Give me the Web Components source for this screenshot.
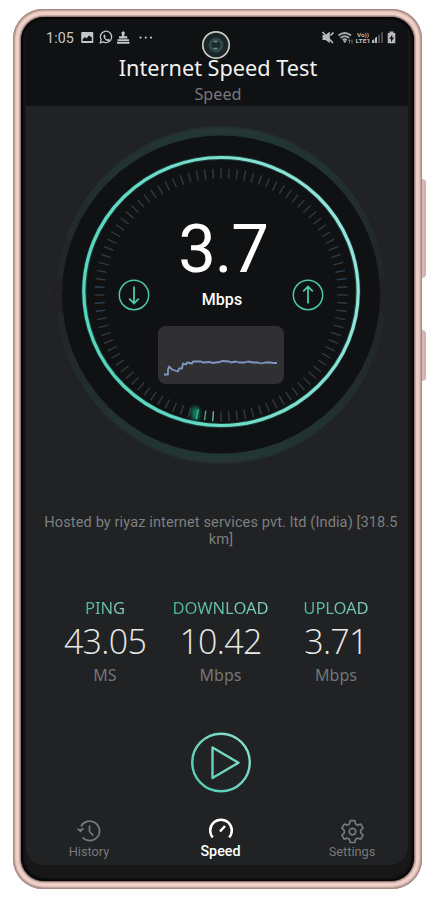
<!DOCTYPE html>
<html lang="en">
<head>
<meta charset="utf-8">
<title>Internet Speed Test</title>
<style>
html,body{margin:0;background:#fff;height:900px;overflow:hidden}
</style>
</head>
<body>
<phone-frame>
  <status-bar slot="top"></status-bar>
  <app-title slot="top" sub="Speed">Internet Speed Test</app-title>
  <speed-gauge value="3.7" unit="Mbps"></speed-gauge>
  <host-line>Hosted by riyaz internet services pvt. ltd (India) [318.5 km]</host-line>
  <stat-row>
    <stat-item label="PING" unit="MS">43.05</stat-item>
    <stat-item label="DOWNLOAD" unit="Mbps">10.42</stat-item>
    <stat-item label="UPLOAD" unit="Mbps">3.71</stat-item>
  </stat-row>
  <play-button></play-button>
  <tab-bar>
    <tab-item icon="history">History</tab-item>
    <tab-item icon="speed" active>Speed</tab-item>
    <tab-item icon="settings">Settings</tab-item>
  </tab-bar>
</phone-frame>
<script>
function define(name, render) {
  customElements.define(name, class extends HTMLElement {
    constructor() {
      super();
      this.attachShadow({ mode: 'open' });
    }
    connectedCallback() {
      this.shadowRoot.innerHTML = render(this);
    }
  });
}

define('phone-frame', () => `<style>
  :host{display:block;position:relative;width:409px;height:880px;margin:9px 0 0 13px;box-sizing:border-box;font-family:Roboto,"Noto Sans",sans-serif}
  .key{position:absolute;left:407px;width:6px;background:linear-gradient(90deg,#b59792,#dcc0b8 50%,#c9aaa3);border-radius:0 4px 4px 0}
  .rim{position:relative;box-sizing:border-box;height:880px;padding:8px;border-radius:30px;background:#e8c9c1;box-shadow:inset 0 0 0 1px #a98a86,inset 0 0 2px 2px #b3938d,inset 0 0 0 6px #efd2ca}
  .body{box-sizing:border-box;height:864px;border-radius:23px;overflow:hidden;background:#161716;padding:0 6px 16px 5px;box-shadow:0 0 0 1px #967b76,0 0 1px 2px #c2a39c}
  .bezel{position:absolute;inset:8px;border-radius:23px;box-shadow:inset 0 0 2px 2px #050606;pointer-events:none}
  .screen{height:848px;border-radius:18px;overflow:hidden;background:#202224;display:flex;flex-direction:column}
  header{height:88.5px;flex:none;background:#101113}
</style>
<div class="key" style="top:170px;height:99px"></div><div class="key" style="top:321px;height:51px"></div>
<div class="rim"><div class="body"><div class="screen"><header><slot name="top"></slot></header><slot></slot></div></div><div class="bezel"></div></div>`);

define('status-bar', () => `<style>
  :host{display:flex;height:39px;box-sizing:border-box;padding:13px 11px 0 20px;align-items:flex-start;color:#c4c5c6;position:relative}
  time{font:14.300px/16px Roboto,sans-serif;letter-spacing:.1px;width:34px}
  svg{display:block}
  .right{margin-left:auto}
  .cam{position:absolute;left:175px;top:12.500px}
</style>
<time>1:05</time>
<svg width="76" height="16" viewBox="0 0 76 16" fill="#c4c5c6">
  <path fill-rule="evenodd" d="M2 2h10.500q.8 0 .8.800v9.400q0 .8-.8.800H2q-.8 0-.8-.800V2.800Q1.200 2 2 2zM2.600 11h9.200V7.500L9 5.500 6.500 8.500 4.800 7 2.600 9.500z"/>
  <path d="M20.300 12.700l.8-2.800a5.700 5.700 0 1 1 2.100 2z" fill="none" stroke="#c4c5c6" stroke-width="1.300"/>
  <path d="M23.500 5l1.200-.4 1 1.900-.7.900q.8 1.500 2.300 2.100l.9-.8 1.700 1-.5 1.300q-1.500.8-3.700-.8-2.700-2.100-2.200-5.200z"/>
  <path d="M43.200 1l2 2-.9 1v2.300h3v2.200h-8.300V6.300h2.900V4l-.8-1zM37.500 9.200H49V11H37.500zM37 11.700h12.500V13.700H37z"/>
  <circle cx="60.500" cy="7.600" r="1.100"/><circle cx="65.800" cy="7.600" r="1.100"/><circle cx="71" cy="7.600" r="1.100"/>
</svg>
<svg class="cam" width="30" height="30" viewBox="0 0 30 30"><circle cx="15" cy="15" r="13.200" fill="#1a2526" stroke="#c8c8c6" stroke-width="1.700"/><circle cx="15" cy="15" r="7.500" fill="#30484a"/><circle cx="15" cy="15" r="4.500" fill="#1a2b2c"/><path d="M12.500 11.500h4M12.500 18.500h4" stroke="#73908f" stroke-width="1.300"/></svg>
<svg class="right" width="76" height="16" viewBox="0 0 76 16" fill="#b8b9ba">
  <path d="M1.500 5h3L8.800 1.500V13L4.500 10h-3z"/><path d="M1.500 2l10.500 11M9.500 5.500l3-3" stroke="#b8b9ba" stroke-width="1.700"/>
  <path d="M17.500 5.500q6-5 12.500 0M19.500 8q4.300-3.500 8.500 0M21.700 10q2-1.600 4 0" fill="none" stroke="#a9aaab" stroke-width="2"/><path d="M21.800 10.500h4l-2 2.500z"/><path d="M28.500 9.500v4m0-4l-1.200 1.500M28.500 9.500l1.200 1.500M31 9.500v4" stroke="#77797a" stroke-width=".9"/>
  <text x="36" y="6.800" font-family="Roboto,sans-serif" font-weight="700" font-size="5.500" textLength="12" lengthAdjust="spacingAndGlyphs">Vo))</text>
  <text x="34.500" y="13.300" font-family="Roboto,sans-serif" font-weight="700" font-size="5.500" textLength="15" lengthAdjust="spacingAndGlyphs">LTE1</text>
  <path d="M51 13v-2.500l2.300-1.500v4zM54 13V8l2-1.500V13z"/><path d="M57 13V5.500L59 4v9zM60 13V3l2-1.500V13z" fill="#4b4c4e"/>
  <path fill-rule="evenodd" d="M68.500 1.500h4V3h1.800v10.300h-7.600V3h1.800zm2.700 3.300L68.300 9H70v3.200L73 7.600h-1.800z"/>
</svg>`);

define('app-title', el => `<style>
  :host{display:block;text-align:center;padding-left:2px;color:#f1f1f1;font:21.700px/24px "Noto Sans",sans-serif;white-space:nowrap}
  p{margin:3px 0 0;font-size:16.200px;line-height:22px;color:#77787a}
</style><slot></slot><p>${el.getAttribute('sub')}</p>`);

define('dir-icon', el => `<style>:host{display:block;width:32px;height:32px}svg{display:block}</style>
<svg width="32" height="32" viewBox="0 0 32 32" fill="none" stroke="#4cc7a4" stroke-width="1.500"><circle cx="16" cy="16" r="14.700"/><path stroke-width="1.800" d="M16 7.500V24.500M11.200 ${el.hasAttribute('up') ? '12.300L16 7.500l4.800 4.800' : '19.700L16 24.500l4.800-4.800'}"/></svg>`);

define('speed-gauge', el => {
  let ticks = '';
  for (let i = 0; i < 96; i++) {
    const lit = { 49: '#71b9a4', 50: '#43a486', 51: '#44d7ab' }[i];
    const blue = [0, 95, 94, 3, 21, 22, 70, 71, 73].includes(i);
    ticks += `<path d="M172 54.500v10" transform="rotate(${i * 3.75} 172 181)" stroke="${lit || (blue ? '#2c4358' : '#353b44')}" stroke-width="${lit ? 1.4 : 1.3}"/>`;
  }
  return `<style>
  :host{display:grid;flex:none;width:344px;height:361px;margin-left:23px;color:#fff}
  .dial,.face{grid-area:1/1;display:block}
  .face{display:grid;grid-template-columns:32px 1fr 32px;padding:113px 69px 0;align-content:start;align-items:start}
  .num{grid-column:1/4;text-align:center;font:400 67px/60px Roboto,sans-serif;letter-spacing:-1.200px;padding-left:4px}
  .unit{text-align:center;font:500 16px/20px Roboto,sans-serif;letter-spacing:.1px;padding:11px 0 0 2px}
  .spark{display:block;grid-column:1/4;justify-self:center;width:126px;height:58px;border-radius:8px;background:#303032;margin-top:15px}
</style>
<svg class="dial" width="344" height="361" viewBox="0 -8 344 361">
  <defs>
    <linearGradient id="h" x1="0" y1="0" x2="0" y2="1"><stop offset="0" stop-color="#253635"/><stop offset=".3" stop-color="#222a2c"/><stop offset=".5" stop-color="#202325"/><stop offset=".7" stop-color="#222a2c"/><stop offset="1" stop-color="#253635"/></linearGradient>
    <linearGradient id="r" x1="0" y1=".6" x2="1" y2=".3"><stop offset="0" stop-color="#53d6bb"/><stop offset="1" stop-color="#96e5dd"/></linearGradient>
    <filter id="b" x="-1" y="-1" width="3" height="3"><feGaussianBlur stdDeviation="2"/></filter>
    <filter id="s"><feGaussianBlur stdDeviation="1"/></filter>
  </defs>
  <ellipse cx="172" cy="181" rx="165" ry="168.500" fill="url(#h)" filter="url(#s)"/>
  <circle cx="172" cy="180.500" r="159" fill="#101113"/>
  <ellipse cx="172" cy="177.500" rx="137" ry="134" fill="none" stroke="#245c55" stroke-width="5" opacity=".6"/>
  ${ticks}
  <ellipse cx="172" cy="177.500" rx="137.200" ry="134" fill="none" stroke="url(#r)" stroke-width="3.200"/>
  <rect x="143" y="293" width="7" height="13" rx="3" fill="#16a77f" filter="url(#b)" opacity=".8"/>
</svg>
<div class="face"><div class="num">${el.getAttribute('value')}</div><dir-icon></dir-icon><div class="unit">${el.getAttribute('unit')}</div><dir-icon up></dir-icon>
<svg class="spark" viewBox="0 0 126 58"><path d="M6 49.500h4v-5l1-3 3 3 6 2 1-3h3l1-5 3 1 1-2 5 1 1-2h8l2 1 7-.5 2 1 8-1 2-1 7 .5 2 1 5-1 3 1h6l3-1 5 1h5l3 1 4-1h5l4 .5h3" transform="translate(0 -1)" fill="none" stroke="#8195c3" stroke-width="1.800" stroke-linejoin="round"/></svg></div>`;
});

define('host-line', () => `<style>:host{display:block;flex:none;box-sizing:border-box;height:107px;padding:47px 8px 0 16px;text-align:center;color:#7d7f80;font:14.600px/17px Roboto,sans-serif;letter-spacing:.1px}</style><slot></slot>`);

define('stat-row', () => `<style>:host{display:grid;flex:none;grid-template-columns:116px 115px 116px;height:139px;padding:22px 0 0 21px;box-sizing:border-box}</style><slot></slot>`);

define('stat-item', el => `<style>
  :host{display:block;text-align:center;font-family:"Noto Sans",sans-serif;white-space:nowrap}
  .l{font-size:16.600px;line-height:24px;letter-spacing:-.1px;background:linear-gradient(90deg,#4bb598,#82cfc0);-webkit-background-clip:text;color:transparent;width:max-content;margin:0 auto}
  .v{font:300 34px/40px "Open Sans","Noto Sans",sans-serif;letter-spacing:-.7px;color:#e8e8e8;margin-top:1.500px}
  .u{font-size:16px;line-height:22px;color:#747678;margin-top:2.500px}
</style><div class="l">${el.getAttribute('label')}</div><div class="v"><slot></slot></div><div class="u">${el.getAttribute('unit')}</div>`);

define('play-button', () => `<style>:host{display:block;flex:none;height:95px;padding:19px 0 0 165px;box-sizing:border-box}svg{display:block}</style>
<svg width="62" height="62" viewBox="0 0 62 62" fill="none" stroke="url(#g)" stroke-width="2.400"><defs><linearGradient id="g" gradientUnits="userSpaceOnUse" x1="0" y1="62" x2="62" y2="0"><stop stop-color="#49cdb0"/><stop offset="1" stop-color="#91dfd4"/></linearGradient></defs><circle cx="30" cy="30.500" r="28.800"/><path d="M21.500 15.500V46L47.500 30.700z" stroke-linejoin="round"/></svg>`);

define('tab-bar', () => `<style>:host{display:grid;flex:1;grid-template-columns:126px 137px 126px;width:389px;justify-content:start;padding-top:9px;box-sizing:border-box}</style><slot></slot>`);

const icons = {
  history: '<path d="M6 9.500A9.800 9.800 0 1 1 7.500 20.500M2.500 11.500l3 2.800 2.800-3.200M5.500 14.300V12M14.500 8.500v6l3.800 4"/>',
  speed: '<path stroke-width="2.500" d="M5.800 20.500A10.800 10.800 0 1 1 22.200 20.500M13 14.500l5-5.500"/>',
  settings: '<circle cx="14.500" cy="14.600" r="3.300"/><path stroke-linejoin="round" transform="translate(.5 1.300)" d="M11.700 2.400h4.600l.8 3.300 2 1.100 3.200-1 2.300 4-2.400 2.300v2.400l2.400 2.300-2.300 4-3.200-1-2 1.100-.8 3.300h-4.600l-.8-3.300-2-1.100-3.200 1-2.300-4 2.400-2.300v-2.400L3.400 9.800l2.300-4 3.200 1 2-1.100z"/>'
};
define('tab-item', el => {
  const on = el.hasAttribute('active');
  return `<style>
  :host{display:flex;flex-direction:column;align-items:center;color:${on ? '#fff' : '#77787a'};font:${on ? '500 14.300px' : '400 12.800px'}/16px Roboto,sans-serif;letter-spacing:0}
  svg{display:block;overflow:visible;margin-bottom:${on ? '-1px' : '0'}}
</style><svg width="28" height="27" viewBox="0 0 28 27" fill="none" stroke="currentColor" stroke-width="1.700">${icons[el.getAttribute('icon')]}</svg><slot></slot>`;
});
</script>
</body>
</html>
